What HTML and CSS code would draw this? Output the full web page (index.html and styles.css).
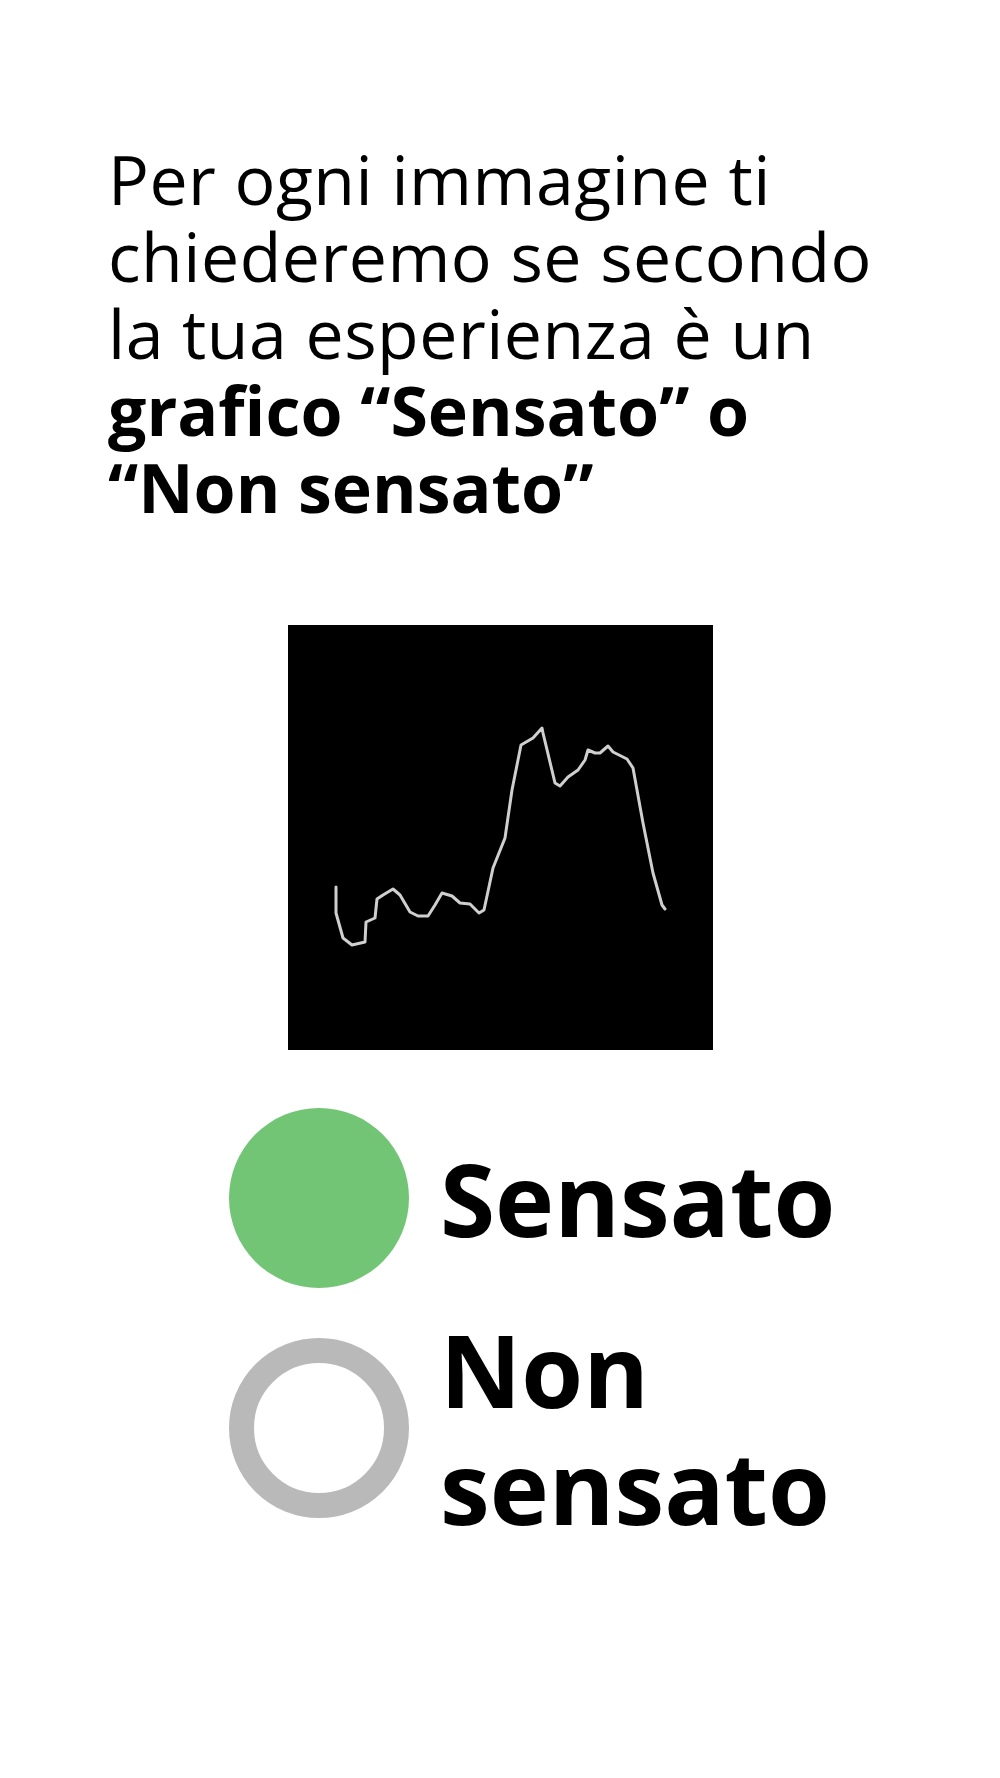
FILE: index.html
```html
<!DOCTYPE html>
<html lang="it">

<head>
    <meta charset="UTF-8">
    <meta name="viewport" content="width=device-width, initial-scale=1.0">
    <title>Sensato o non sensato</title>
    <link rel="stylesheet" href="styles.css">
</head>

<body>
    <p class="prompt">
        Per ogni immagine ti chiederemo se secondo la tua esperienza è un
        <strong>grafico “Sensato” o “Non sensato”</strong>
    </p>

    <div class="chart">
        <svg viewBox="0 0 425 425" width="425" height="425">
            <polyline fill="none" stroke="#cfcfcf" stroke-width="3" stroke-linejoin="round" stroke-linecap="round"
                points="48,262 48,288 55,313 64,320 77,317 78,297 87,293 89,274 95,270 105,264 112,270 122,287 130,291 140,291 147,280 154,268 164,271 172,278 182,279 191,288 196,285 205,243 217,213 224,165 233,120 245,113 254,103 255,108 267,158 272,161 280,152 290,145 297,135 300,125 307,128 312,128 320,121 325,127 339,134 345,143 355,198 365,248 374,280 377,284" />
        </svg>
    </div>

    <div class="options">
        <div class="option">
            <span class="dot selected"></span>
            <span class="label">Sensato</span>
        </div>
        <div class="option">
            <span class="dot"></span>
            <span class="label">Non sensato</span>
        </div>
    </div>
</body>

</html>
```

FILE: styles.css
```css
html {
    background-color: #ffffff;
    font-family: "Open Sans", sans-serif;
    color: #000000;
}

body {
    margin: 0;
    width: 1000px;
}

.prompt {
    margin: 0;
    padding: 140px 108px 0;
    font-size: 68px;
    line-height: 77px;
    font-weight: 400;
    letter-spacing: 0.5px;
}

.prompt strong {
    font-weight: 700;
    letter-spacing: 0;
}

.chart {
    display: flex;
    justify-content: center;
    margin-top: 100px;
}

.chart svg {
    display: block;
    background-color: #000000;
}

.options {
    display: flex;
    flex-direction: column;
    gap: 23px;
    margin-top: 58px;
    padding-left: 229px;
}

.option {
    display: flex;
    align-items: center;
    gap: 31px;
}

.dot {
    flex: none;
    width: 180px;
    height: 180px;
    box-sizing: border-box;
    border-radius: 50%;
    border: 25px solid #b9b9b9;
}

.dot.selected {
    border: none;
    background-color: #72c574;
}

.label {
    width: 420px;
    font-size: 100px;
    line-height: 117px;
    font-weight: 700;
}
```
